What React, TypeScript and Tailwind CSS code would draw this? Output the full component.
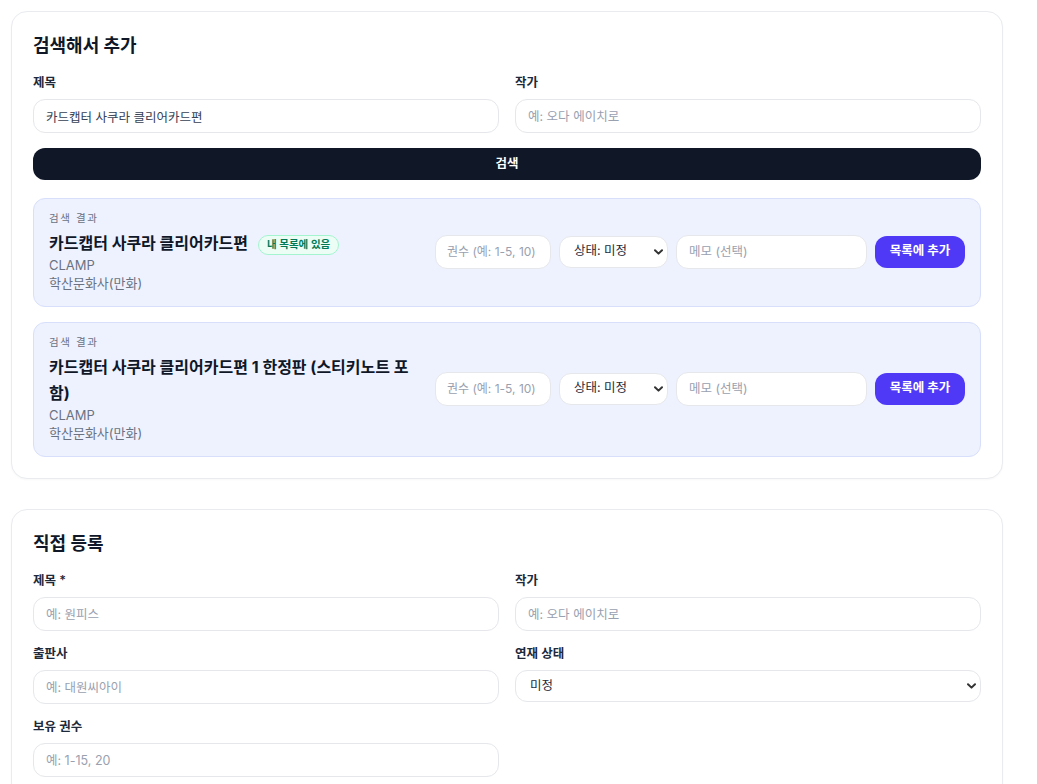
import type { ReactNode } from 'react'

// 만화 목록 — 검색해서 추가 / 직접 등록 폼 (정적 화면)

interface SearchResult { title: string; author: string; publisher: string; owned?: boolean }

const RESULTS: SearchResult[] = [
  { title: '카드캡터 사쿠라 클리어카드편', author: 'CLAMP', publisher: '학산문화사(만화)', owned: true },
  { title: '카드캡터 사쿠라 클리어카드편 1 한정판 (스티키노트 포함)', author: 'CLAMP', publisher: '학산문화사(만화)' },
]

function Chevron() {
  return (
    <svg width="9" height="6" viewBox="0 0 9 6" className="pointer-events-none absolute right-[5px] top-1/2 -translate-y-1/2 text-[#333]">
      <path d="M1 1.2l3.5 3.4L8 1.2" fill="none" stroke="currentColor" strokeWidth="2" strokeLinecap="round" strokeLinejoin="round" />
    </svg>
  )
}

function Field({ label, children }: { label: string; children: ReactNode }) {
  return (
    <div>
      <label className="mb-[7px] block text-[12.5px] leading-[18px] font-semibold text-gray-800">{label}</label>
      {children}
    </div>
  )
}

function TextInput({ placeholder, value, className = 'w-full px-3 text-[12.5px]' }: { placeholder?: string; value?: string; className?: string }) {
  return (
    <input
      defaultValue={value}
      placeholder={placeholder}
      className={`h-[34px] rounded-xl border border-gray-200 bg-white text-gray-700 outline-none placeholder:text-gray-400 ${className}`}
    />
  )
}

function Select({ value, className = 'w-full', h = 'h-8' }: { value: string; className?: string; h?: string }) {
  return (
    <div className={`relative ${className}`}>
      <select defaultValue={value} className={`${h} w-full appearance-none rounded-xl border border-gray-200 bg-white pl-[14px] pr-6 text-[12.5px] text-gray-800 outline-none`}>
        <option>{value}</option>
      </select>
      <Chevron />
    </div>
  )
}

function ResultRow({ r }: { r: SearchResult }) {
  return (
    <div className="flex items-center gap-4 rounded-xl border border-[#d8dffb] bg-[#eef2ff] px-[15px] pt-3 pb-[14px]">
      <div className="min-w-0 flex-1">
        <p className="text-[10.5px] leading-4 tracking-[0.15em] text-gray-500">검색 결과</p>
        <p className="mt-[3px] text-[16px] leading-[26px] font-bold text-gray-900">
          {r.title}
          {r.owned && (
            <span className="ml-2.5 inline-flex h-5 items-center rounded-full border border-emerald-200 bg-emerald-50 px-2 align-[1px] text-[10.5px] leading-none font-semibold text-emerald-700">
              내 목록에 있음
            </span>
          )}
        </p>
        <p className="text-[13px] leading-[18px] text-gray-500">{r.author}</p>
        <p className="text-[13px] leading-[18px] text-gray-500">{r.publisher}</p>
      </div>
      <div className="flex shrink-0 items-center gap-2">
        <TextInput placeholder="권수 (예: 1-5, 10)" className="w-[116px] px-[11px] text-[12px]" />
        <Select value="상태: 미정" className="w-[109px]" />
        <TextInput placeholder="메모 (선택)" className="w-[191px] px-3 text-[12.5px]" />
        <button className="h-8 w-[90px] rounded-xl bg-indigo-600 text-[12.5px] font-bold text-white">목록에 추가</button>
      </div>
    </div>
  )
}

function Card({ title, children }: { title: string; children: ReactNode }) {
  return (
    <section className="rounded-2xl border border-[#e9ebef] bg-white px-[21px] pt-[22px] pb-[21px] shadow-[0_1px_2px_rgba(16,24,40,0.03)]">
      <h2 className="mb-4 text-[18px] leading-6 font-bold text-gray-900">{title}</h2>
      {children}
    </section>
  )
}

export default function App() {
  return (
    <div className="min-h-screen bg-white font-['Inter','Noto_Sans_CJK_KR',sans-serif]">
      <div className="flex w-[992px] flex-col gap-[30px] pt-[11px] pl-[11px] box-content pb-10">
        <Card title="검색해서 추가">
          <div className="grid grid-cols-2 gap-x-4">
            <Field label="제목">
              <TextInput value="카드캡터 사쿠라 클리어카드편" />
            </Field>
            <Field label="작가">
              <TextInput placeholder="예: 오다 에이치로" />
            </Field>
          </div>
          <button className="mt-[15px] h-8 w-full rounded-xl bg-[#101828] text-[12.5px] font-bold text-white">검색</button>
          <div className="mt-[18px] flex flex-col gap-[15px]">
            {RESULTS.map((r) => (
              <ResultRow key={r.title} r={r} />
            ))}
          </div>
        </Card>

        <Card title="직접 등록">
          <div className="grid grid-cols-2 gap-x-4 gap-y-[14px]">
            <Field label="제목 *">
              <TextInput placeholder="예: 원피스" />
            </Field>
            <Field label="작가">
              <TextInput placeholder="예: 오다 에이치로" />
            </Field>
            <Field label="출판사">
              <TextInput placeholder="예: 대원씨아이" />
            </Field>
            <Field label="연재 상태">
              <Select value="미정" />
            </Field>
            <Field label="보유 권수">
              <TextInput placeholder="예: 1-15, 20" />
            </Field>
          </div>
        </Card>
      </div>
    </div>
  )
}
